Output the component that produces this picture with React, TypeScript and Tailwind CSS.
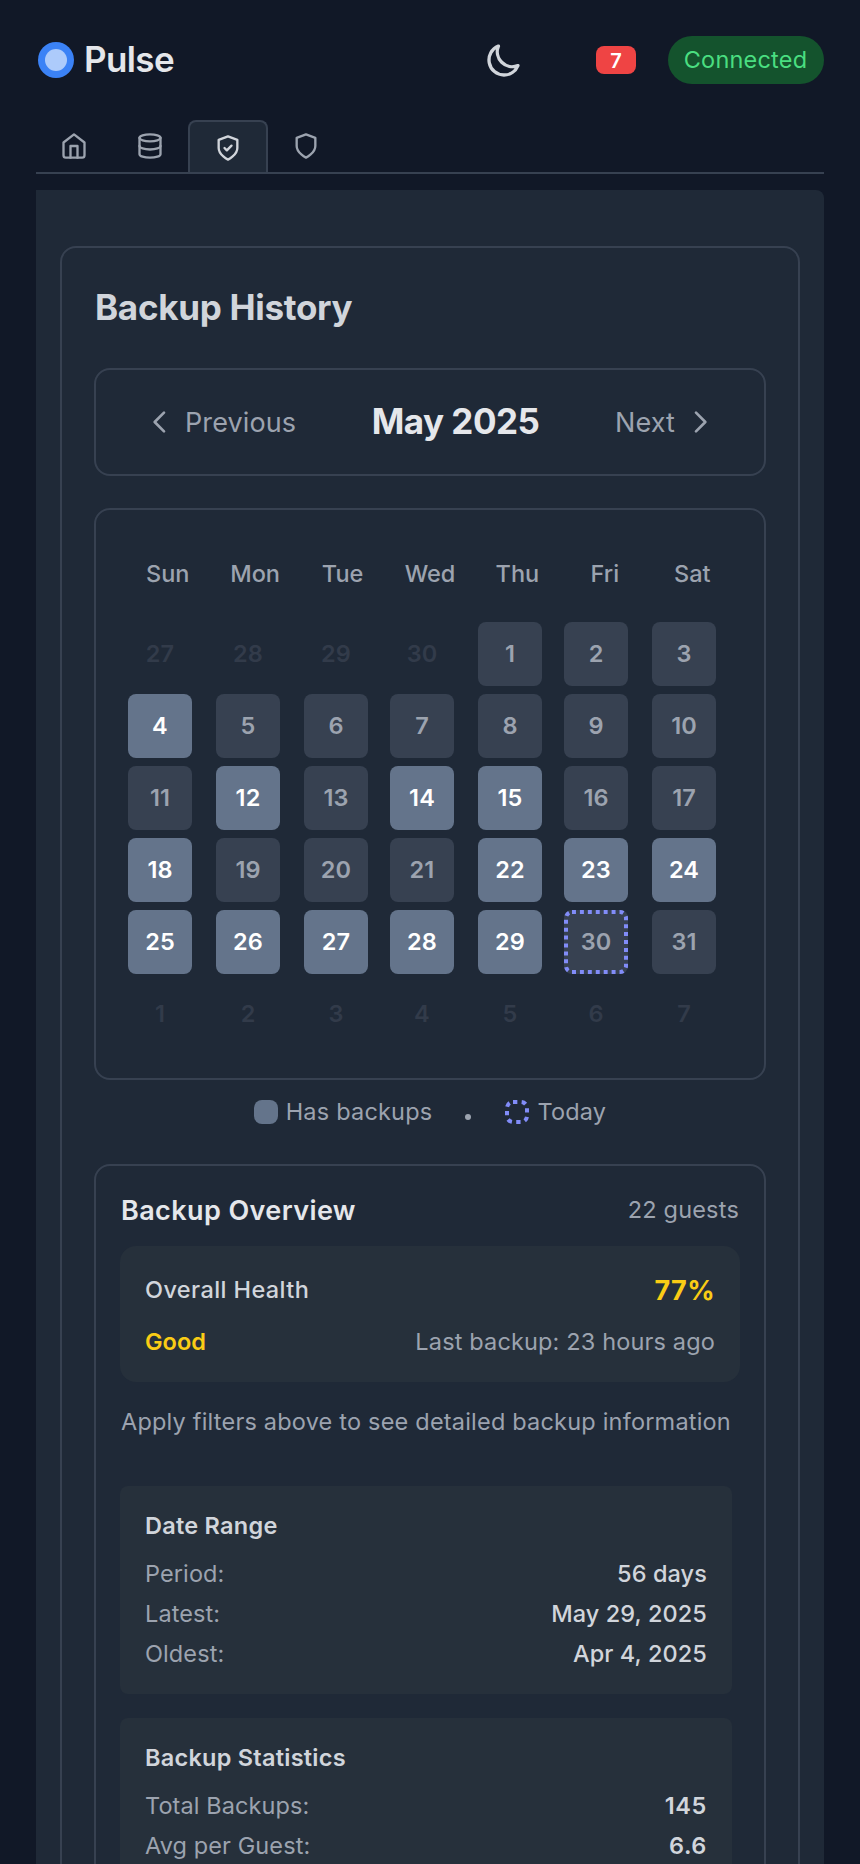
import React from "react";

const weekdays = ["Sun", "Mon", "Tue", "Wed", "Thu", "Fri", "Sat"];
const backupDays = [4, 12, 14, 15, 18, 22, 23, 24, 25, 26, 27, 28, 29];
const TODAY = 30;

type Day = { day: number; inMonth: boolean };
const days: Day[] = [
  ...[27, 28, 29, 30].map((day) => ({ day, inMonth: false })),
  ...Array.from({ length: 31 }, (_, i) => ({ day: i + 1, inMonth: true })),
  ...[1, 2, 3, 4, 5, 6, 7].map((day) => ({ day, inMonth: false })),
];

function TabIcon({ children }: { children: React.ReactNode }) {
  return (
    <svg className="size-7" viewBox="0 0 24 24" fill="none" stroke="currentColor" strokeWidth="2" strokeLinecap="round" strokeLinejoin="round">
      {children}
    </svg>
  );
}

function DayCell({ day, inMonth }: Day) {
  const base = "relative flex size-16 items-center justify-center rounded-lg text-[23.5px] tracking-[0.1px] font-semibold";
  if (!inMonth) return <div className={`${base} text-[#323b4a]`}>{day}</div>;
  if (backupDays.includes(day)) return <div className={`${base} bg-[#64748b] text-white`}>{day}</div>;
  return (
    <div className={`${base} bg-[#374151] text-[#9ca3af]`}>
      {day}
      {day === TODAY && (
        <svg className="absolute inset-0 size-16" viewBox="0 0 64 64" fill="none" stroke="#818cf8" strokeWidth="4">
          <path d="M8 2H56A6 6 0 0 1 62 8V56A6 6 0 0 1 56 62H8A6 6 0 0 1 2 56V8A6 6 0 0 1 8 2" strokeDasharray="3.96 3.96" />
        </svg>
      )}
    </div>
  );
}

function Row({ label, value, bold }: { label: string; value: string; bold?: boolean }) {
  return (
    <div className="flex justify-between">
      <span className="tracking-[0.1px] text-[#9ca3af]">{label}</span>
      <span className={bold ? "pr-px font-semibold tracking-[0.6px] text-[#d1d5db]" : "pr-px font-medium tracking-[0.1px] text-[#d1d5db]"}>{value}</span>
    </div>
  );
}

function StatCard({ title, children }: { title: string; children: React.ReactNode }) {
  return (
    <div className="mr-2 rounded-lg bg-[#26303b] py-6 pr-6 pl-[25px]">
      <div className="mb-4 font-semibold tracking-[0.25px] text-[#d1d5db]">{title}</div>
      <div className="flex flex-col gap-2">{children}</div>
    </div>
  );
}

export default function App() {
  return (
    <div className="h-[1864px] w-[860px] overflow-hidden bg-[#111827] px-9 font-['Inter',sans-serif] text-[23.5px] leading-8 tracking-[0.2px]">
      <header className="flex h-30 items-center">
        <svg className="ml-0.5 size-9" viewBox="0 0 36 36">
          <circle cx="18" cy="18" r="18" fill="#3b82f6" />
          <circle cx="18" cy="18" r="11" fill="#adcbfb" />
        </svg>
        <span className="mb-0.5 ml-2.5 text-[35px] font-semibold tracking-[-0.6px] text-[#e5e7eb]">Pulse</span>
        <svg className="ml-auto size-10 text-[#d1d5db]" viewBox="0 0 24 24" fill="none" stroke="currentColor" strokeWidth="2" strokeLinecap="round" strokeLinejoin="round">
          <path d="M20.354 15.354A9 9 0 018.646 3.646 9.003 9.003 0 0012 21a9.003 9.003 0 008.354-5.646z" />
        </svg>
        <span className="ml-18 flex h-7 w-10 items-center justify-center rounded-lg bg-[#ef4444] pt-px text-[20px] font-semibold text-white">7</span>
        <span className="ml-8 flex h-12 w-39 items-center justify-center rounded-full bg-[#14532d] pr-px text-[#4ade80]">Connected</span>
      </header>

      <nav className="flex h-[54px] items-start border-b-2 border-[#374151] text-[#9ca3af]">
        <div className="flex h-13 w-19 items-center justify-center">
          <TabIcon>
            <path d="m3 9 9-7 9 7v11a2 2 0 0 1-2 2H5a2 2 0 0 1-2-2z" />
            <path d="M9 22V12h6v10" />
          </TabIcon>
        </div>
        <div className="flex h-13 w-19 items-center justify-center">
          <TabIcon>
            <ellipse cx="12" cy="5" rx="9" ry="3" />
            <path d="M21 12c0 1.66-4 3-9 3s-9-1.34-9-3" />
            <path d="M3 5v14c0 1.66 4 3 9 3s9-1.34 9-3V5" />
          </TabIcon>
        </div>
        <div className="flex h-13 w-20 items-center justify-center rounded-t-lg border-2 border-b-0 border-[#374151] bg-[#1f2937] pt-0.5 text-[#d1d5db]">
          <TabIcon>
            <path d="M12 22s8-4 8-10V5l-8-3-8 3v7c0 6 8 10 8 10z" />
            <path d="m9 12 2 2 4-4" />
          </TabIcon>
        </div>
        <div className="flex h-13 w-19 items-center justify-center">
          <TabIcon>
            <path d="M12 22s8-4 8-10V5l-8-3-8 3v7c0 6 8 10 8 10z" />
          </TabIcon>
        </div>
      </nav>

      <main className="mt-4 h-[1800px] rounded-tr-lg bg-[#1f2937] px-6 pt-14">
        <section className="h-[1800px] rounded-2xl border-2 border-[#374151] px-8">
          <h1 className="mt-[39px] h-[41px] pl-px text-[35px] leading-10 font-bold tracking-[-0.3px] text-[#d1d5db]">Backup History</h1>

          <div className="mt-10 flex h-27 items-center rounded-2xl border-2 border-[#374151] px-12 text-[27px] tracking-[0.1px] text-[#9ca3af]">
            <button className="flex items-center gap-[9px]">
              <svg className="size-8" viewBox="0 0 24 24" fill="none" stroke="currentColor" strokeWidth="2" strokeLinecap="round" strokeLinejoin="round">
                <path d="M15 19l-7-7 7-7" />
              </svg>
              <span className="pt-0.5">Previous</span>
            </button>
            <span className="flex-1 pb-0.5 text-center text-[35px] font-bold tracking-[-0.5px] text-[#e5e7eb]">May 2025</span>
            <button className="flex items-center gap-[9px]">
              <span className="pt-0.5">Next</span>
              <svg className="size-8" viewBox="0 0 24 24" fill="none" stroke="currentColor" strokeWidth="2" strokeLinecap="round" strokeLinejoin="round">
                <path d="M9 5l7 7-7 7" />
              </svg>
            </button>
          </div>

          <div className="mt-8 h-143 rounded-2xl border-2 border-[#374151] p-8">
            <div className="grid w-[604px] grid-cols-7 gap-x-2 py-4 text-center font-medium tracking-normal text-[#9ca3af]">
              {weekdays.map((d) => (
                <div key={d}>{d}</div>
              ))}
            </div>
            <div className="mt-4 grid grid-cols-[88px_88px_86px_88px_86px_88px_64px] gap-y-2">
              {days.map((d, i) => (
                <DayCell key={i} {...d} />
              ))}
            </div>
          </div>

          <div className="mt-4 flex h-8 items-center justify-center text-[#9ca3af]">
            <span className="size-6 rounded-lg bg-[#64748b]" />
            <span className="ml-2">Has backups</span>
            <span className="mr-[34px] ml-[33px] mt-2.5 size-1.5 rounded-full bg-[#9ca3af]" />
            <svg className="size-6" viewBox="0 0 24 24" fill="none" stroke="#818cf8" strokeWidth="4">
              <path d="M8 2H16A6 6 0 0 1 22 8V16A6 6 0 0 1 16 22H8A6 6 0 0 1 2 16V8A6 6 0 0 1 8 2" strokeDasharray="4.35 4.35" />
            </svg>
            <span className="ml-2">Today</span>
          </div>

          <div className="mt-9 h-[900px] rounded-2xl border-2 border-[#374151] px-6 pt-6">
            <div className="flex h-10 items-center justify-between">
              <h2 className="pt-px pl-px text-[27px] font-semibold tracking-[0.4px] text-[#e5e7eb]">Backup Overview</h2>
              <span className="pr-px text-[#9ca3af]">22 guests</span>
            </div>
            <div className="mt-4 h-34 rounded-2xl bg-[#26303b] pt-6 pr-[25px] pl-[25px]">
              <div className="flex h-10 items-center justify-between">
                <span className="font-medium tracking-[0.4px] text-[#d1d5db]">Overall Health</span>
                <span className="pt-px text-[27px] font-bold tracking-[0.4px] text-[#facc15]">77%</span>
              </div>
              <div className="mt-4 flex h-8 items-center justify-between">
                <span className="font-semibold tracking-normal text-[#facc15]">Good</span>
                <span className="tracking-[0.15px] text-[#9ca3af]">Last backup: 23 hours ago</span>
              </div>
            </div>
            <p className="mt-6 pl-px whitespace-nowrap text-[#9ca3af]">Apply filters above to see detailed backup information</p>
            <div className="mt-12 flex flex-col gap-6">
              <StatCard title="Date Range">
                <Row label="Period:" value="56 days" />
                <Row label="Latest:" value="May 29, 2025" />
                <Row label="Oldest:" value="Apr 4, 2025" />
              </StatCard>
              <StatCard title="Backup Statistics">
                <Row label="Total Backups:" value="145" bold />
                <Row label="Avg per Guest:" value="6.6" bold />
              </StatCard>
            </div>
          </div>
        </section>
      </main>
    </div>
  );
}
